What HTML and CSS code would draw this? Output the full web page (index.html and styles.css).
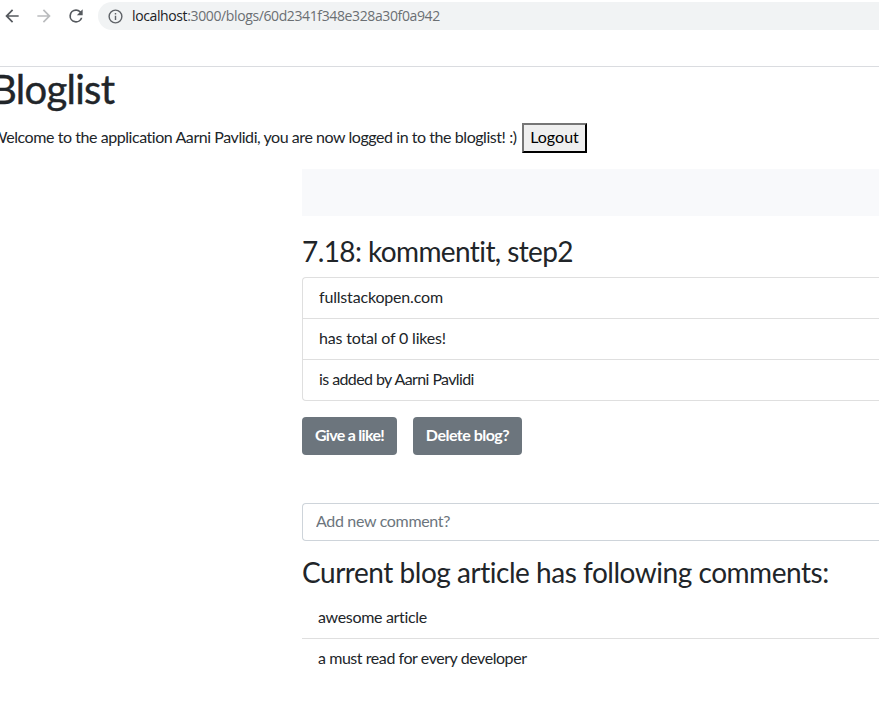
FILE: index.html
```html
<!DOCTYPE html>
<html lang="en">
<head>
<meta charset="utf-8">
<title>Bloglist</title>
<link rel="stylesheet" href="styles.css">
</head>
<body>
<header class="browser">
  <div class="toolbar">
    <svg class="nav-icon" viewBox="0 0 24 24"><path d="M20 11H7.83l5.59-5.59L12 4l-8 8 8 8 1.41-1.41L7.83 13H20v-2z"/></svg>
    <svg class="nav-icon disabled" viewBox="0 0 24 24"><path d="M12 4l-1.41 1.41L16.17 11H4v2h12.17l-5.58 5.59L12 20l8-8z"/></svg>
    <svg class="nav-icon" viewBox="0 0 24 24"><path d="M17.65 6.35A7.96 7.96 0 0 0 12 4a8 8 0 1 0 7.73 10h-2.08A6 6 0 1 1 12 6c1.66 0 3.14.69 4.22 1.78L13 11h7V4l-2.35 2.35z"/></svg>
    <div class="address">
      <svg class="info-icon" viewBox="0 0 24 24"><path d="M11 7h2v2h-2zm0 4h2v6h-2zm1-9a10 10 0 1 0 0 20 10 10 0 0 0 0-20zm0 18a8 8 0 1 1 0-16 8 8 0 0 1 0 16z"/></svg>
      <span class="url"><span class="host">localhost</span>:3000/blogs/60d2341f348e328a30f0a942</span>
    </div>
  </div>
</header>
<main class="page">
  <h1><span>Bloglist</span></h1>
  <div class="welcome"><span class="welcome-text">Welcome to the application Aarni Pavlidi, you are now logged in to the bloglist! :)</span><button class="logout">Logout</button></div>
  <div class="container">
    <nav class="navbar"></nav>
    <h3 class="title"><span>7.18: kommentit, step2</span></h3>
    <ul class="list">
      <li><span class="t-site">fullstackopen.com</span></li>
      <li><span class="t-likes">has total of 0 likes!</span></li>
      <li><span class="t-added">is added by Aarni Pavlidi</span></li>
    </ul>
    <div class="actions">
      <button class="btn like">Give a like!</button>
      <button class="btn delete">Delete blog?</button>
    </div>
    <input class="comment-input" type="text" placeholder="Add new comment?">
    <h3 class="subtitle"><span>Current blog article has following comments:</span></h3>
    <ul class="list flush">
      <li><span class="t-first">awesome article</span></li>
      <li><span class="t-second">a must read for every developer</span></li>
    </ul>
  </div>
</main>
</body>
</html>
```

FILE: styles.css
```css
* { box-sizing: border-box; }
html, body { height: 100%; }
body {
  margin: 0;
  overflow: hidden;
  background: #fff;
  color: #212529;
  font: 16px/22px Lato, "Open Sans", sans-serif;
  font-variant-ligatures: none;
  white-space: nowrap;
}
.browser { height: 67px; border-bottom: 1px solid #dadce0; }
.toolbar { display: flex; align-items: center; height: 32px; padding-left: 2px; }
.nav-icon { flex: none; width: 20px; height: 20px; margin-right: 12px; fill: #55595e; }
.nav-icon.disabled { fill: #babcbe; }
.address {
  flex: 1;
  display: flex;
  align-items: center;
  gap: 7px;
  height: 28px;
  padding-left: 9px;
  background: #f1f3f4;
  border-radius: 14px 0 0 14px;
}
.info-icon { width: 17px; height: 17px; fill: #5f6368; }
.url { font: 14px/20px "Open Sans", sans-serif; color: #6b6f73; letter-spacing: -0.38px; margin-left: 1px; }
.host { color: #202124; }

h1, h3, ul { margin: 0; padding: 0; }
h1 { height: 48px; margin: 0 0 8px -9px; font-size: 40px; font-weight: 400; line-height: 44px; letter-spacing: -0.7px; -webkit-text-stroke: 0.4px #212529; }
h3 { height: 33.6px; margin-bottom: 8px; font-size: 28px; font-weight: 400; line-height: 32px; }
.title { letter-spacing: -0.6px; }
.subtitle { letter-spacing: -0.47px; }
.welcome { display: flex; align-items: center; height: 30px; margin: 0 0 16px -9px; }
.welcome-text { width: 531px; padding-bottom: 2px; letter-spacing: -0.44px; }
.logout {
  width: 65px;
  height: 30px;
  padding: 0 0 2px;
  border: 2px outset #212529;
  border-color: #767676 #212529 #212529 #767676;
  background: #efefef;
  color: #000;
  font: inherit;
}
.container { margin-left: 302px; }
.navbar { height: 47px; background: #f8f9fb; margin-bottom: 19.4px; }
.list { height: 124px; list-style: none; border: 1px solid #dfdfdf; border-right: 0; border-radius: 4px 0 0 4px; }
.list li { height: 41px; padding: 8px 16px; border-bottom: 1px solid #dfdfdf; }
.list li:last-child { border-bottom: 0; }
.t-site { letter-spacing: -0.18px; }
.t-likes { letter-spacing: -0.18px; }
.t-added { letter-spacing: -0.65px; word-spacing: 0.3px; }
.t-first { letter-spacing: -0.32px; }
.t-second { letter-spacing: -0.44px; }
.actions { display: flex; gap: 16px; margin: 16px 0 48px; }
.btn { height: 38px; padding: 0 0 2px; border: 0; border-radius: 4px; background: #6c757d; color: #fff; font: 700 16px/22px Lato, sans-serif; }
.like { width: 95px; letter-spacing: -0.7px; }
.delete { width: 109px; letter-spacing: -0.5px; }
.comment-input {
  display: block;
  width: 100%;
  height: 38px;
  margin-bottom: 15px;
  padding: 5px 13px 7px;
  border: 1px solid #ced4da;
  border-right: 0;
  border-radius: 4px 0 0 4px;
  font: inherit;
  letter-spacing: -0.33px;
}
.comment-input::placeholder { color: #6c757d; opacity: 1; }
.flush { height: 82px; border: 0; }
```
